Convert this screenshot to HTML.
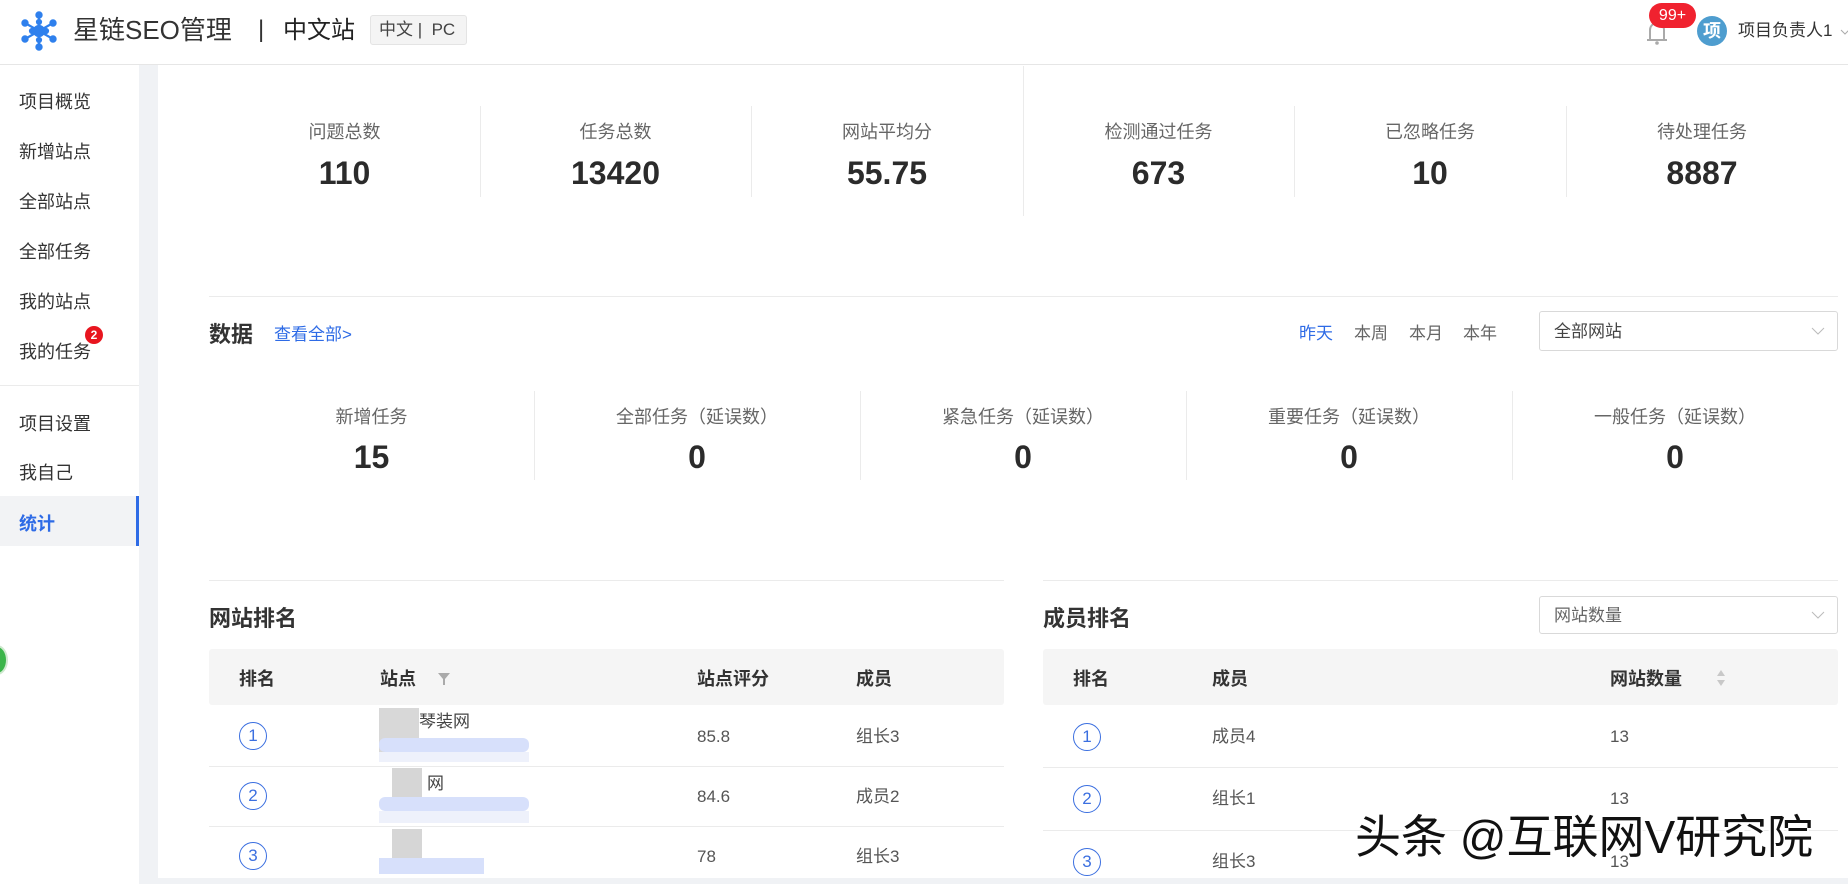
<!DOCTYPE html>
<html><head><meta charset="utf-8"><style>
*{margin:0;padding:0;box-sizing:border-box}
body{width:1848px;height:884px;overflow:hidden;background:#f0f2f5;font-family:"Liberation Sans","Noto Sans CJK SC",sans-serif;color:#333;position:relative}
.a{position:absolute;white-space:nowrap;line-height:1.25}
.hdr{left:0;top:0;width:1848px;height:65px;background:#fff;border-bottom:1px solid #e6e6e6}
.side{left:0;top:65px;width:139px;height:819px;background:#fff}
.main{left:158px;top:65px;width:1690px;height:813px;background:#fff}
.nav{left:19px;font-size:18px;color:#333}
.lbl{font-size:18px;color:#666;text-align:center}
.val{font-size:32px;font-weight:bold;color:#2b2b2b;text-align:center}
.vl{width:1px;background:#ebebeb}
.hl{height:1px;background:#ebebeb}
.th{font-size:18px;font-weight:bold;color:#333}
.td{font-size:17px;color:#555;line-height:20px}
.circ{width:28px;height:28px;border:1.5px solid #3b6fe0;border-radius:50%;color:#3b6fe0;font-size:17px;text-align:center;line-height:25px}
.sel{border:1px solid #d9d9d9;border-radius:3px;background:#fff;font-size:17px;color:#444;padding-left:14px}
.chev{position:absolute;right:12px;top:50%;margin-top:-4px}
</style></head><body>
<div class="a hdr"></div>
<svg class="a" style="left:20px;top:11px" width="38" height="40" viewBox="0 0 36 40">
<g stroke="#2f80ed" stroke-width="2.2" fill="#2f80ed">
<line x1="18" y1="4" x2="18" y2="36"/><line x1="4" y1="12" x2="32" y2="28"/><line x1="4" y1="28" x2="32" y2="12"/>
<circle cx="18" cy="4" r="2.6"/><circle cx="18" cy="36" r="2.6"/><circle cx="4" cy="12" r="2.6"/><circle cx="32" cy="28" r="2.6"/><circle cx="4" cy="28" r="2.6"/><circle cx="32" cy="12" r="2.6"/>
<circle cx="18" cy="20" r="5"/><circle cx="11" cy="20" r="2"/><circle cx="25" cy="20" r="2"/><circle cx="18" cy="11" r="2"/><circle cx="18" cy="29" r="2"/></g></svg>
<div class="a" style="left:73px;top:14px;font-size:26px;color:#333">星链SEO管理</div>
<div class="a" style="left:258px;top:15px;font-size:24px;color:#333">|</div>
<div class="a" style="left:283px;top:16px;font-size:24px;color:#222">中文站</div>
<div class="a" style="left:370px;top:15px;width:97px;height:30px;background:#f4f4f4;border:1px solid #e4e4e4;border-radius:3px;font-size:17px;color:#444;line-height:28px;padding-left:8px">中文 | &nbsp;PC</div>
<svg class="a" style="left:1645px;top:18px" width="24" height="28" viewBox="0 0 24 28"><path d="M5 22V12a7 7 0 0 1 14 0v10M2 22h20" stroke="#aaa" stroke-width="2" fill="none"/><circle cx="12" cy="25" r="1.8" fill="#aaa"/></svg>
<div class="a" style="left:1649px;top:3px;width:47px;height:25px;background:#f0222f;border-radius:13px;color:#fff;font-size:16px;text-align:center;line-height:25px">99+</div>
<div class="a" style="left:1697px;top:16px;width:30px;height:30px;border-radius:50%;background:#4e9dcf;color:#fff;font-weight:bold;font-size:18px;text-align:center;line-height:30px">项</div>
<div class="a" style="left:1738px;top:20px;font-size:17px;color:#333">项目负责人1</div>
<svg class="a" style="left:1840px;top:29px" width="10" height="7" viewBox="0 0 10 7"><path d="M1 1l4 4 4-4" stroke="#aaa" fill="none"/></svg>

<div class="a side"></div>
<div class="a nav" style="top:91px">项目概览</div>
<div class="a nav" style="top:141px">新增站点</div>
<div class="a nav" style="top:191px">全部站点</div>
<div class="a nav" style="top:241px">全部任务</div>
<div class="a nav" style="top:291px">我的站点</div>
<div class="a nav" style="top:341px">我的任务</div>
<div class="a" style="left:85px;top:326px;width:18px;height:18px;border-radius:50%;background:#e8151f;color:#fff;font-size:12px;font-weight:bold;text-align:center;line-height:18px">2</div>
<div class="a hl" style="left:0;top:385px;width:139px"></div>
<div class="a nav" style="top:413px">项目设置</div>
<div class="a nav" style="top:462px">我自己</div>
<div class="a" style="left:0;top:496px;width:139px;height:50px;background:#f2f3f5;border-right:3px solid #2e6be6"></div>
<div class="a nav" style="top:513px;font-weight:bold;color:#2e6be6">统计</div>
<div class="a" style="left:-14px;top:645px;width:22px;height:30px;border-radius:50%;background:#3bb54a;border:2px solid #cfe9cf"></div>

<div class="a main"></div>
<div class="a vl" style="left:1023px;top:66px;height:150px"></div>
<div class="a vl" style="left:480px;top:106px;height:91px"></div>
<div class="a vl" style="left:751px;top:106px;height:91px"></div>
<div class="a vl" style="left:1294px;top:106px;height:91px"></div>
<div class="a vl" style="left:1566px;top:106px;height:91px"></div>
<div class="a lbl" style="left:209px;top:121px;width:271px">问题总数</div>
<div class="a lbl" style="left:480px;top:121px;width:271px">任务总数</div>
<div class="a lbl" style="left:751px;top:121px;width:272px">网站平均分</div>
<div class="a lbl" style="left:1023px;top:121px;width:271px">检测通过任务</div>
<div class="a lbl" style="left:1294px;top:121px;width:272px">已忽略任务</div>
<div class="a lbl" style="left:1566px;top:121px;width:272px">待处理任务</div>
<div class="a val" style="left:209px;top:153px;width:271px">110</div>
<div class="a val" style="left:480px;top:153px;width:271px">13420</div>
<div class="a val" style="left:751px;top:153px;width:272px">55.75</div>
<div class="a val" style="left:1023px;top:153px;width:271px">673</div>
<div class="a val" style="left:1294px;top:153px;width:272px">10</div>
<div class="a val" style="left:1566px;top:153px;width:272px">8887</div>

<div class="a hl" style="left:209px;top:296px;width:1629px"></div>
<div class="a" style="left:209px;top:321px;font-size:22px;font-weight:bold;color:#333">数据</div>
<div class="a" style="left:274px;top:324px;font-size:17px;color:#2e6be6">查看全部&gt;</div>
<div class="a" style="left:1299px;top:323px;font-size:17px;color:#2e6be6">昨天</div>
<div class="a" style="left:1354px;top:323px;font-size:17px;color:#666">本周</div>
<div class="a" style="left:1409px;top:323px;font-size:17px;color:#666">本月</div>
<div class="a" style="left:1463px;top:323px;font-size:17px;color:#666">本年</div>
<div class="a sel" style="left:1539px;top:311px;width:299px;height:40px;line-height:40px">全部网站<svg class="chev" width="14" height="8" viewBox="0 0 14 8"><path d="M1 1l6 6 6-6" stroke="#bbb" fill="none"/></svg></div>

<div class="a vl" style="left:534px;top:391px;height:89px"></div>
<div class="a vl" style="left:860px;top:391px;height:89px"></div>
<div class="a vl" style="left:1186px;top:391px;height:89px"></div>
<div class="a vl" style="left:1512px;top:391px;height:89px"></div>
<div class="a lbl" style="left:209px;top:406px;width:325px">新增任务</div>
<div class="a lbl" style="left:534px;top:406px;width:326px">全部任务（延误数）</div>
<div class="a lbl" style="left:860px;top:406px;width:326px">紧急任务（延误数）</div>
<div class="a lbl" style="left:1186px;top:406px;width:326px">重要任务（延误数）</div>
<div class="a lbl" style="left:1512px;top:406px;width:326px">一般任务（延误数）</div>
<div class="a val" style="left:209px;top:437px;width:325px">15</div>
<div class="a val" style="left:534px;top:437px;width:326px">0</div>
<div class="a val" style="left:860px;top:437px;width:326px">0</div>
<div class="a val" style="left:1186px;top:437px;width:326px">0</div>
<div class="a val" style="left:1512px;top:437px;width:326px">0</div>

<div class="a hl" style="left:209px;top:580px;width:795px"></div>
<div class="a" style="left:209px;top:605px;font-size:22px;font-weight:bold;color:#333">网站排名</div>
<div class="a" style="left:209px;top:649px;width:795px;height:56px;background:#f5f5f5;border-radius:3px"></div>
<div class="a th" style="left:239px;top:668px">排名</div>
<div class="a th" style="left:380px;top:668px">站点</div>
<svg class="a" style="left:437px;top:672px" width="14" height="14" viewBox="0 0 14 14"><path d="M1 1h12L8 7v6H6V7z" fill="#aaa"/></svg>
<div class="a th" style="left:697px;top:668px">站点评分</div>
<div class="a th" style="left:856px;top:668px">成员</div>
<div class="a hl" style="left:209px;top:766px;width:795px"></div>
<div class="a hl" style="left:209px;top:826px;width:795px"></div>
<div class="a circ" style="left:239px;top:722px">1</div>
<div class="a circ" style="left:239px;top:782px">2</div>
<div class="a circ" style="left:239px;top:842px">3</div>
<div class="a" style="left:379px;top:708px;width:40px;height:44px;background:#d8d8d8"></div>
<div class="a" style="left:419px;top:711px;font-size:17px;color:#444">琴装网</div>
<div class="a" style="left:379px;top:738px;width:150px;height:14px;background:#d7e0fb;border-radius:6px"></div>
<div class="a" style="left:379px;top:752px;width:150px;height:10px;background:#eef1fb"></div>
<div class="a" style="left:392px;top:768px;width:30px;height:42px;background:#d6d6d6"></div>
<div class="a" style="left:427px;top:773px;font-size:17px;color:#444">网</div>
<div class="a" style="left:379px;top:797px;width:150px;height:14px;background:#d7e0fb;border-radius:6px"></div>
<div class="a" style="left:379px;top:811px;width:150px;height:12px;background:#eef1fb"></div>
<div class="a" style="left:392px;top:829px;width:30px;height:40px;background:#d6d6d6"></div>
<div class="a" style="left:379px;top:858px;width:105px;height:16px;background:#d7e0fb"></div>
<div class="a td" style="left:697px;top:727px">85.8</div>
<div class="a td" style="left:697px;top:787px">84.6</div>
<div class="a td" style="left:697px;top:847px">78</div>
<div class="a td" style="left:856px;top:727px">组长3</div>
<div class="a td" style="left:856px;top:787px">成员2</div>
<div class="a td" style="left:856px;top:847px">组长3</div>

<div class="a hl" style="left:1043px;top:580px;width:795px"></div>
<div class="a" style="left:1043px;top:605px;font-size:22px;font-weight:bold;color:#333">成员排名</div>
<div class="a sel" style="left:1539px;top:596px;width:299px;height:38px;line-height:38px;color:#666">网站数量<svg class="chev" width="14" height="8" viewBox="0 0 14 8"><path d="M1 1l6 6 6-6" stroke="#bbb" fill="none"/></svg></div>
<div class="a" style="left:1043px;top:649px;width:795px;height:56px;background:#f5f5f5;border-radius:3px"></div>
<div class="a th" style="left:1073px;top:668px">排名</div>
<div class="a th" style="left:1212px;top:668px">成员</div>
<div class="a th" style="left:1610px;top:668px">网站数量</div>
<svg class="a" style="left:1715px;top:669px" width="12" height="18" viewBox="0 0 12 18"><path d="M6 1l4 6H2z M6 17l4-6H2z" fill="#c8c8c8"/></svg>
<div class="a hl" style="left:1043px;top:767px;width:795px"></div>
<div class="a hl" style="left:1043px;top:830px;width:795px"></div>
<div class="a circ" style="left:1073px;top:723px">1</div>
<div class="a circ" style="left:1073px;top:785px">2</div>
<div class="a circ" style="left:1073px;top:848px">3</div>
<div class="a td" style="left:1212px;top:727px">成员4</div>
<div class="a td" style="left:1212px;top:789px">组长1</div>
<div class="a td" style="left:1212px;top:852px">组长3</div>
<div class="a td" style="left:1610px;top:727px">13</div>
<div class="a td" style="left:1610px;top:789px">13</div>
<div class="a td" style="left:1610px;top:852px">13</div>

<div class="a" style="left:1355px;top:809px;font-size:46px;color:#111;text-shadow:2px 2px 0 #fff,-2px -2px 0 #fff,2px -2px 0 #fff,-2px 2px 0 #fff">头条 @互联网V研究院</div>
</body></html>
